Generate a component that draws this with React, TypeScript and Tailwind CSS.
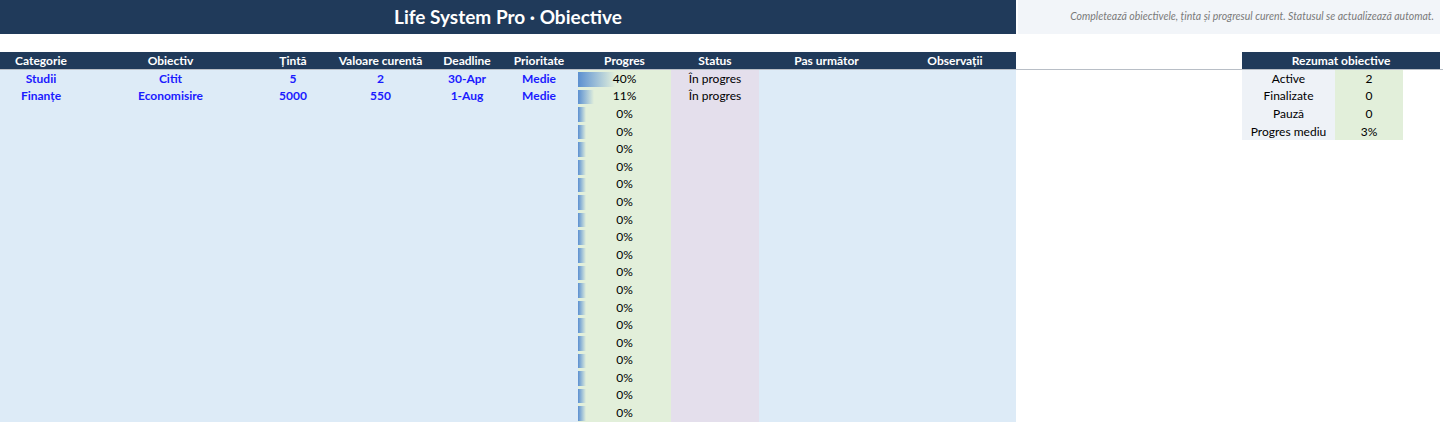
import React from "react";

const cols = [
  { n: "Categorie", w: 82 },
  { n: "Obiectiv", w: 177 },
  { n: "Țintă", w: 68 },
  { n: "Valoare curentă", w: 107 },
  { n: "Deadline", w: 66 },
  { n: "Prioritate", w: 78 },
  { n: "Progres", w: 93 },
  { n: "Status", w: 88 },
  { n: "Pas următor", w: 135 },
  { n: "Observații", w: 122 },
];

const data = [
  ["Studii", "Citit", "5", "2", "30-Apr", "Medie", 40, "În progres"],
  ["Finanțe", "Economisire", "5000", "550", "1-Aug", "Medie", 11, "În progres"],
];

export default function App() {
  const rows = Array.from({ length: 20 }, (_, i) => data[i] || ["", "", "", "", "", "", 0, ""]);
  return (
    <div className="w-[1445px] h-[427px] bg-white text-[12px] overflow-hidden" style={{ fontFamily: "Lato, 'Open Sans', sans-serif" }}>
      <div className="flex h-[34px]">
        <div className="w-[1016px] bg-[#203a5a] text-white text-[19px] font-bold flex items-center justify-center">Life System Pro · Obiective</div>
        <div className="w-[2px]" />
        <div className="w-[422px] bg-[#f2f5f9] text-[#7a7a7a] italic text-[10.5px] flex items-center justify-end pr-[6px]">Completează obiectivele, ținta și progresul curent. Statusul se actualizează automat.</div>
      </div>
      <div className="h-[18px]" />
      <div className="flex">
        <div className="w-[1016px]">
          <div className="flex h-[17px] bg-[#203a5a] text-white font-bold">
            {cols.map((c) => (
              <div key={c.n} style={{ width: c.w }} className="flex items-center justify-center">{c.n}</div>
            ))}
          </div>
          <div className="h-[1px] bg-[#b8bec6]" />
          {rows.map((r, i) => (
            <div key={i} className="flex h-[17.6px] bg-[#ddebf7] text-[#1a1aff] font-bold">
              {cols.slice(0, 6).map((c, j) => (
                <div key={j} style={{ width: c.w }} className="flex items-center justify-center">{r[j] as string}</div>
              ))}
              <div style={{ width: 93 }} className="relative bg-[#e2efda] flex items-center justify-center text-black font-normal">
                <div className="absolute left-0 top-[2px] bottom-[1px] bg-gradient-to-r from-[#5b8fd0] to-[#e2efda]" style={{ width: 8 + (r[6] as number) * 0.72 }} />
                <span className="relative">{r[6] as number}%</span>
              </div>
              <div style={{ width: 88 }} className="bg-[#e4dfec] flex items-center justify-center text-black font-normal">{r[7] as string}</div>
              <div style={{ width: 257 }} />
            </div>
          ))}
        </div>
        <div className="flex-1 flex flex-col">
          <div className="h-[17px]" />
          <div className="h-[1px] bg-[#b8bec6]" />
        </div>
        <div className="w-[2px] h-[1px]" />
      </div>
      <div className="absolute left-[1242px] top-[52px] w-[198px]">
        <div className="h-[17px] bg-[#203a5a] text-white font-bold flex items-center justify-center">Rezumat obiective</div>
        <div className="h-[1px] bg-[#b8bec6]" />
        {[["Active", "2"], ["Finalizate", "0"], ["Pauză", "0"], ["Progres mediu", "3%"]].map(([a, b]) => (
          <div key={a} className="flex h-[17.6px]">
            <div className="w-[93px] bg-[#eef2f7] flex items-center justify-center">{a}</div>
            <div className="w-[68px] bg-[#e2efda] flex items-center justify-center">{b}</div>
          </div>
        ))}
      </div>
    </div>
  );
}
